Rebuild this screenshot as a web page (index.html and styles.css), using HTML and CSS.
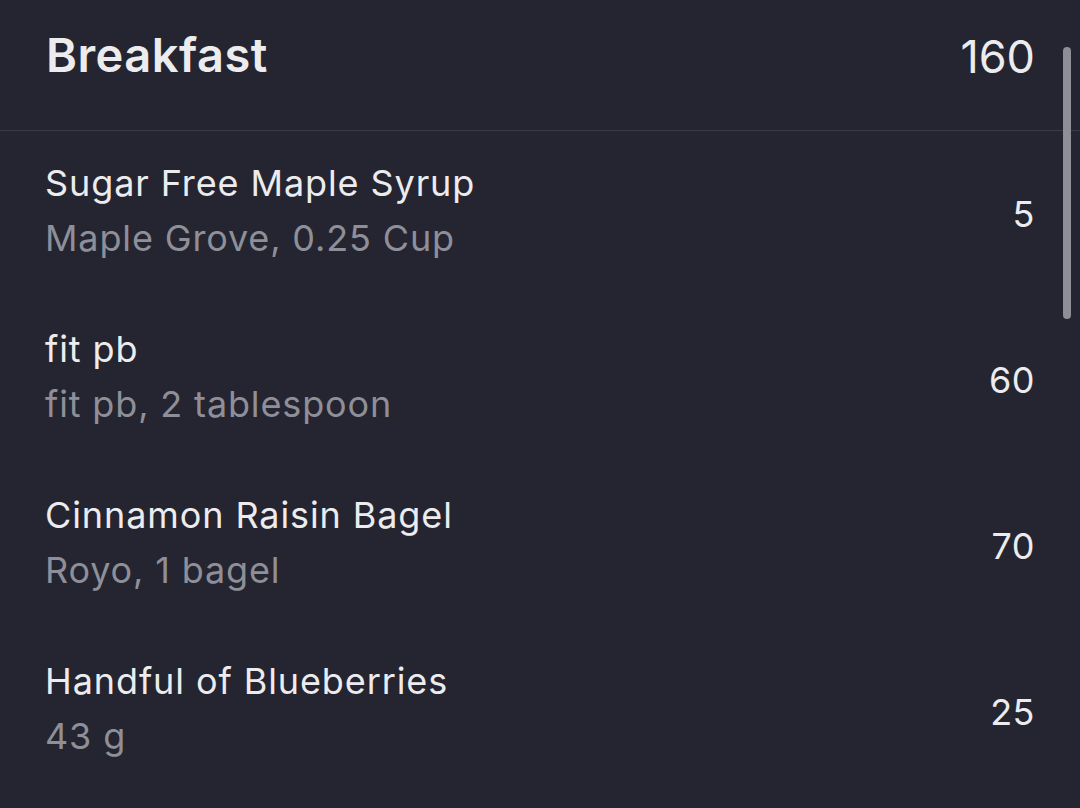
FILE: index.html
```html
<!DOCTYPE html>
<html lang="en">

<head>
    <meta charset="UTF-8">
    <meta name="viewport" content="width=device-width, initial-scale=1.0">
    <title>Breakfast</title>
    <link rel="stylesheet" href="styles.css">
</head>

<body>
    <div class="meal">
        <header class="meal-header">
            <h1>Breakfast</h1>
            <span class="meal-total">160</span>
        </header>

        <ul class="food-list">
            <li class="food-row">
                <div class="food-info">
                    <div class="food-name">Sugar Free Maple Syrup</div>
                    <div class="food-detail">Maple Grove, 0.25 Cup</div>
                </div>
                <span class="food-cal">5</span>
            </li>
            <li class="food-row">
                <div class="food-info">
                    <div class="food-name">fit pb</div>
                    <div class="food-detail">fit pb, 2 tablespoon</div>
                </div>
                <span class="food-cal">60</span>
            </li>
            <li class="food-row">
                <div class="food-info">
                    <div class="food-name">Cinnamon Raisin Bagel</div>
                    <div class="food-detail">Royo, 1 bagel</div>
                </div>
                <span class="food-cal">70</span>
            </li>
            <li class="food-row">
                <div class="food-info">
                    <div class="food-name">Handful of Blueberries</div>
                    <div class="food-detail">43 g</div>
                </div>
                <span class="food-cal">25</span>
            </li>
        </ul>

        <!-- scroll indicator -->
        <div class="scroll-thumb"></div>
    </div>
</body>

</html>
```

FILE: styles.css
```css
html,
body {
    margin: 0;
    padding: 0;
    height: 100%;
    background-color: #242530;
    font-family: "Inter", "Roboto", sans-serif;
    color: #ececef;
    overflow: hidden;
}

.meal {
    position: relative;
    height: 808px;
}

.meal-header {
    display: flex;
    justify-content: space-between;
    align-items: center;
    height: 131px;
    padding: 0 45px 0 46px;
    border-bottom: 1px solid #3a3b46;
    box-sizing: border-box;
}

.meal-header h1 {
    margin: 0;
    font-size: 47px;
    font-weight: 600;
    letter-spacing: 0.5px;
    color: #ececef;
    padding-bottom: 22px;
}

.meal-total {
    font-size: 45px;
    font-weight: 400;
    padding-bottom: 17px;
}

.food-list {
    list-style: none;
    margin: 0;
    padding: 0;
}

.food-row {
    display: flex;
    justify-content: space-between;
    align-items: center;
    height: 166px;
    padding: 0 45px 0 45px;
}

.food-info {
    padding-bottom: 6px;
}

.food-name {
    font-size: 36px;
    line-height: 55px;
    letter-spacing: 0.9px;
    color: #ececef;
}

.food-detail {
    font-size: 36px;
    line-height: 55px;
    letter-spacing: 0.85px;
    color: #8e8f98;
}

.food-cal {
    font-size: 36px;
    letter-spacing: 0.5px;
    color: #ececef;
}

.scroll-thumb {
    position: absolute;
    top: 47px;
    left: 1063px;
    width: 8px;
    height: 272px;
    border-radius: 4px;
    background-color: #8e8f96;
}
```
